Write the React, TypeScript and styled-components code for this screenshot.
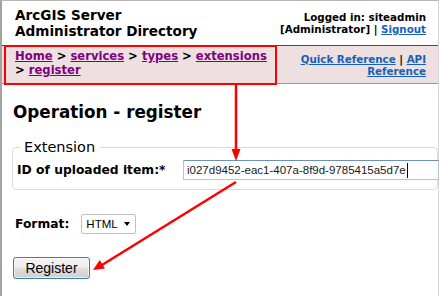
import styled, { createGlobalStyle } from 'styled-components';

const GlobalStyle = createGlobalStyle`
  html, body {
    margin: 0;
    padding: 0;
    height: 100%;
    background: #fff;
  }
  #root {
    height: 100%;
  }
`

const Root = styled.div`
  position: relative;
  height: 100%;
  overflow: hidden;
`

const Page = styled.div`
  box-sizing: border-box;
  height: 100%;
  border-left: 2px solid #a3a3a3;
  border-top: 1px solid #b8b8b8;
  border-right: 1px solid #d6d6d6;
  font-family: "DejaVu Sans", Verdana, sans-serif;
  color: #000;
`

const Header = styled.div`
  display: flex;
  justify-content: space-between;
  align-items: center;
  box-sizing: border-box;
  height: 44px;
  padding: 0 12px 0 13px;
`

const Title = styled.div`
  font-size: 13.6px;
  font-weight: bold;
  line-height: 16px;
`

const UserInfo = styled.div`
  text-align: right;
  font-size: 10.3px;
  font-weight: bold;
  line-height: 12px;
`

const Link = styled.a<{ $visited?: boolean }>`
  color: ${p => p.$visited ? '#800080' : '#1560bd'};
  text-decoration: underline;
  cursor: pointer;
`

const NavBar = styled.div`
  display: flex;
  justify-content: space-between;
  align-items: flex-end;
  box-sizing: border-box;
  height: 39px;
  padding: 0 12px 6px 13px;
  background: #eee0e0;
  border-top: 1px solid #4d4d4d;
  border-bottom: 1px solid #9a9a9a;
`

const Crumbs = styled.div`
  width: 262px;
  font-size: 11.6px;
  font-weight: bold;
  line-height: 14px;
`

const QuickLinks = styled.div`
  text-align: right;
  font-size: 10.3px;
  font-weight: bold;
  line-height: 12px;
`

const Heading = styled.h1`
  margin: 18px 0 0 11px;
  font-size: 16.8px;
  line-height: 20px;
`

const Fieldset = styled.fieldset`
  margin: 17px 0 0 10px;
  padding: 0 0 9px 4px;
  min-width: 0;
  border: 1px solid #d3dde6;
  border-radius: 4px;
`

const Legend = styled.legend`
  margin-left: 3px;
  padding: 0 4px;
  font-size: 14.5px;
  line-height: 17px;
`

const FieldRow = styled.div`
  display: grid;
  grid-template-columns: 166px auto;
  align-items: center;
  margin-top: 4px;
`

const FieldLabel = styled.label`
  font-size: 12.3px;
  font-weight: bold;
`

const TextBox = styled.div`
  display: flex;
  align-items: center;
  box-sizing: border-box;
  width: 256px;
  height: 20px;
  padding-left: 3px;
  background: #fff;
  border: 1px solid #a9c7e3;
  border-top-color: #6b92bb;
  font-family: "Liberation Sans", Arial, sans-serif;
  font-size: 11.5px;
  color: #1a1a1a;
  white-space: nowrap;
`

const Caret = styled.span`
  display: inline-block;
  width: 1px;
  height: 15px;
  margin-left: 1px;
  background: #000;
`

const FormatRow = styled.div`
  display: flex;
  align-items: center;
  gap: 12px;
  margin: 24px 0 0 13px;
`

const SelectBox = styled.div`
  display: flex;
  align-items: center;
  justify-content: space-between;
  box-sizing: border-box;
  width: 55px;
  height: 20px;
  padding: 0 5px 0 4px;
  border: 1px solid #c2c2c2;
  border-radius: 2px;
  font-family: "Liberation Sans", Arial, sans-serif;
  font-size: 11.5px;
`

const DropArrow = styled.span`
  width: 0;
  height: 0;
  border-left: 3.5px solid transparent;
  border-right: 3.5px solid transparent;
  border-top: 4px solid #000;
`

const RegisterButton = styled.button`
  display: block;
  margin: 23px 0 0 11px;
  width: 77px;
  height: 22px;
  padding: 0;
  border: 1px solid #3c7db0;
  border-radius: 3px;
  background: linear-gradient(#f4f4f4, #ececec 50%, #dedede 50%, #d0d0d0);
  box-shadow: inset 0 0 0 1px rgba(255,255,255,0.6);
  font-family: "Liberation Sans", Arial, sans-serif;
  font-size: 14px;
  color: #000;
`

const Annotations = styled.svg`
  position: absolute;
  top: 0;
  left: 0;
  pointer-events: none;
`

const crumbs = ['Home', 'services', 'types', 'extensions', 'register'];

function App() {
  return (
    <Root>
      <GlobalStyle />
      <Page>
        <Header>
          <Title>ArcGIS Server<br />Administrator Directory</Title>
          <UserInfo>
            Logged in: siteadmin<br />
            [Administrator] | <Link>Signout</Link>
          </UserInfo>
        </Header>
        <NavBar>
          <Crumbs>
            {crumbs.map((c, i) => (
              <span key={c}>{i > 0 && ' > '}<Link $visited>{c}</Link></span>
            ))}
          </Crumbs>
          <QuickLinks>
            <Link>Quick Reference</Link> | <Link>API<br />Reference</Link>
          </QuickLinks>
        </NavBar>
        <Heading>Operation - register</Heading>
        <Fieldset>
          <Legend>Extension</Legend>
          <FieldRow>
            <FieldLabel>ID of uploaded item:*</FieldLabel>
            <TextBox>i027d9452-eac1-407a-8f9d-9785415a5d7e<Caret /></TextBox>
          </FieldRow>
        </Fieldset>
        <FormatRow>
          <FieldLabel>Format:</FieldLabel>
          <SelectBox>HTML<DropArrow /></SelectBox>
        </FormatRow>
        <RegisterButton>Register</RegisterButton>
      </Page>
      <Annotations width="439" height="296" viewBox="0 0 439 296">
        <rect x="5" y="46" width="271" height="38" fill="none" stroke="#f00" strokeWidth="2" />
        <line x1="236" y1="85" x2="236" y2="151" stroke="#f00" strokeWidth="2.5" />
        <polygon points="231.5,149 240.5,149 236,161" fill="#f00" />
        <line x1="236" y1="182" x2="102" y2="265" stroke="#f00" strokeWidth="2.5" />
        <polygon points="93,270 105,268.5 99.7,260" fill="#f00" />
      </Annotations>
    </Root>
  )
}

export default App
